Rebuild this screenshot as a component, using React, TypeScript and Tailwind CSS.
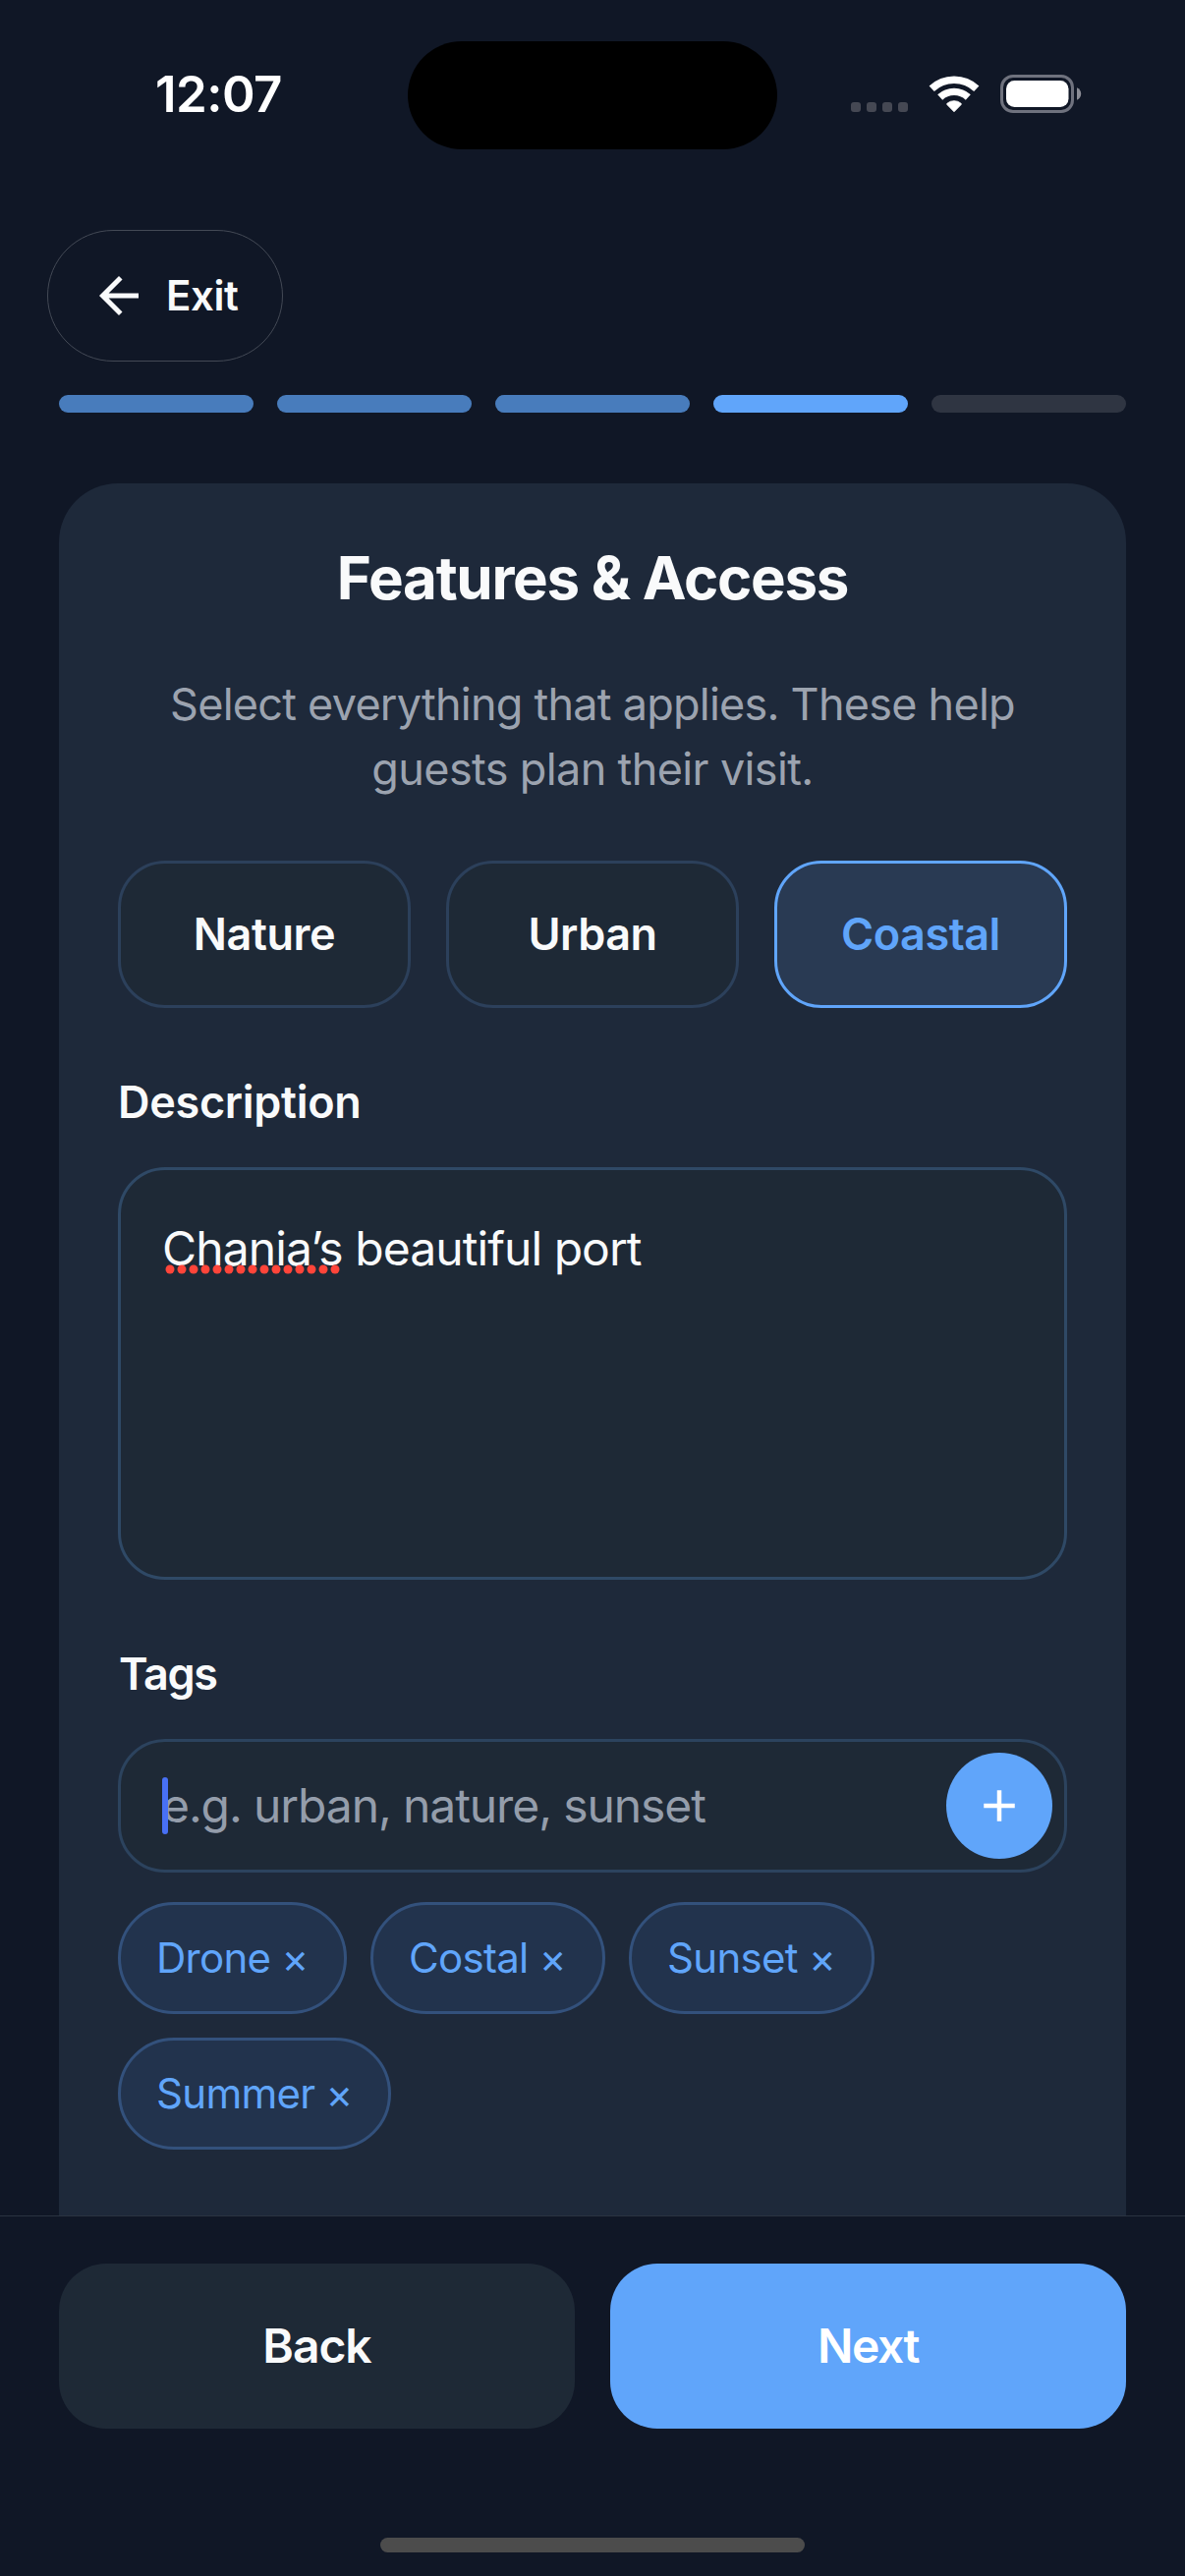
type Step = "done" | "current" | "upcoming";

const steps: Step[] = ["done", "done", "done", "current", "upcoming"];

const stepColor: Record<Step, string> = {
  done: "bg-[#487cbc]",
  current: "bg-[#60a5fa]",
  upcoming: "bg-[#2f3542]",
};

const settings = [
  { label: "Nature", selected: false, spacing: "tracking-[-0.4px]" },
  { label: "Urban", selected: false, spacing: "tracking-[-0.5px]" },
  { label: "Coastal", selected: true, spacing: "tracking-[-0.5px]" },
];

const tags = [
  { label: "Drone", width: "w-[233px]" },
  { label: "Costal", width: "w-[239px]" },
  { label: "Sunset", width: "w-[250px]" },
  { label: "Summer", width: "w-[278px]" },
];

function WifiIcon() {
  return (
    <svg className="h-[38px] w-[52px]" viewBox="0 0 52 38" fill="none">
      <path d="M3.2 13.2A33.4 33.4 0 0 1 48.8 13.2" stroke="white" strokeWidth="7.6" />
      <path d="M11.7 22A21.1 21.1 0 0 1 40.3 22" stroke="white" strokeWidth="7.4" />
      <path
        d="M26 36.8L18.9 29.6Q18.3 28.7 19.2 28A11 11 0 0 1 32.8 28Q33.7 28.7 33.1 29.6Z"
        fill="white"
        stroke="white"
        strokeWidth="0.8"
        strokeLinejoin="round"
      />
    </svg>
  );
}

function BatteryIcon() {
  return (
    <svg className="h-[39px] w-[83px]" viewBox="0 0 83 39" fill="none">
      <rect x="1.5" y="1.5" width="72" height="36" rx="11.5" stroke="#6f727e" strokeWidth="3" />
      <rect x="6" y="6" width="63.5" height="27" rx="8.5" fill="white" />
      <path d="M78 13.2C80.6 14.2 82.2 16.6 82.2 19.5S80.6 24.8 78 25.8Z" fill="#8b8d96" />
    </svg>
  );
}

function StatusBar() {
  return (
    <div className="relative flex h-[234px] shrink-0 items-start justify-between pl-[158px] pr-[105px] pt-[42px]">
      <span className="flex h-[108px] items-center text-[51px] font-semibold tracking-[-0.56px] text-white">
        12:07
      </span>
      <div className="absolute left-[415px] top-[42px] h-[110px] w-[376px] rounded-full bg-black" />
      <div className="flex h-[107px] items-center">
        <div className="mt-[27px] flex gap-[6px]">
          {[0, 1, 2, 3].map((dot) => (
            <span key={dot} className="size-[10px] rounded-[3px] bg-[#454853]" />
          ))}
        </div>
        <div className="ml-[21px] mt-px">
          <WifiIcon />
        </div>
        <div className="ml-[21px]">
          <BatteryIcon />
        </div>
      </div>
    </div>
  );
}

function TagChip({ label, width }: { label: string; width: string }) {
  return (
    <button
      className={`flex h-[114px] items-center whitespace-pre rounded-full border-[3px] border-[#33517c] bg-[#22334d] pb-px pl-[36px] text-[42px] tracking-[-0.7px] text-[#60a5fa] ${width}`}
    >
      {label} ×
    </button>
  );
}

export default function App() {
  return (
    <div className="flex h-[2622px] w-[1206px] flex-col overflow-hidden bg-[#101726] font-[Inter,sans-serif] text-[#f9fafb]">
      <StatusBar />

      <header className="shrink-0">
        <button className="ml-[48px] flex h-[134px] w-[240px] items-center rounded-full border border-[#434955] pl-[42px]">
          <svg className="size-[60px]" viewBox="0 0 24 24" fill="#f9fafb">
            <path d="M20 11H7.83l5.59-5.59L12 4l-8 8 8 8 1.41-1.41L7.83 13H20v-2z" />
          </svg>
          <span className="ml-[18px] pb-px text-[42px] font-semibold tracking-[-0.4px]">Exit</span>
        </button>
        <div className="mx-[60px] mt-[34px] grid grid-cols-5 gap-[24px]">
          {steps.map((step, i) => (
            <span key={i} className={`h-[18px] rounded-full ${stepColor[step]}`} />
          ))}
        </div>
      </header>

      <main className="mx-[60px] mt-[72px] flex h-[1763px] shrink-0 flex-col rounded-t-[60px] bg-[#1e293a] px-[60px]">
        <h1 className="mt-[59px] text-center text-[60px] font-bold leading-[74px] tracking-[-1.27px]">
          Features &amp; Access
        </h1>
        <p className="mt-[59px] whitespace-nowrap text-center text-[45px] leading-[66px] text-[#9ca3af]">
          <span className="tracking-[-0.757px]">Select everything that applies. These help</span>
          <br />
          <span className="tracking-[-0.63px]">guests plan their visit.</span>
        </p>

        <div className="mt-[60px] grid shrink-0 grid-cols-3 gap-[36px]">
          {settings.map(({ label, selected, spacing }) => (
            <button
              key={label}
              className={`h-[150px] rounded-[48px] border-[3px] text-[45px] font-semibold ${spacing} ${
                selected
                  ? "border-[#60a5fa] bg-[#293a53] text-[#60a5fa]"
                  : "border-[#2c405b] bg-[#1e2936]"
              }`}
            >
              {label}
            </button>
          ))}
        </div>

        <label className="mt-[67px] block text-[45px] font-semibold leading-[58px] tracking-[-0.3px]">
          Description
        </label>
        <div className="mt-[37px] h-[420px] shrink-0 rounded-[48px] border-[3px] border-[#2f4966] bg-[#1e2936] px-[42px] pt-[51px] text-[48px] leading-[58px] tracking-[-0.94px]">
          <span className="relative inline-block tracking-[-0.86px]">
            Chania’s
            <svg className="absolute left-[3px] top-[45px] h-[10px] w-[180px]" viewBox="0 0 180 10">
              {Array.from({ length: 15 }, (_, i) => (
                <circle key={i} cx={5 + i * 12} cy={5} r={4.5} fill="#ff453a" />
              ))}
            </svg>
          </span>{" "}
          beautiful port
        </div>

        <label className="mt-[67px] block pl-px text-[45px] font-semibold leading-[58px] tracking-[-1.4px]">
          Tags
        </label>
        <div className="relative mt-[37px] flex h-[136px] shrink-0 items-center justify-between rounded-[48px] border-[3px] border-[#2c435e] bg-[#1e2936] pl-[42px] pr-[12px]">
          <span className="text-[48px] tracking-[-1.1px] text-[#949dab]">e.g. urban, nature, sunset</span>
          <span className="absolute left-[42px] top-[36px] h-[58px] w-[6px] rounded-full bg-[#4870f5]" />
          <button className="flex size-[108px] items-center justify-center rounded-full bg-[#60a5fa]">
            <svg className="size-[54px]" viewBox="0 0 24 24" fill="white">
              <path d="M19 13h-6v6h-2v-6H5v-2h6V5h2v6h6v2z" />
            </svg>
          </button>
        </div>

        <div className="mt-[30px] flex flex-wrap gap-[24px]">
          {tags.map((tag) => (
            <TagChip key={tag.label} {...tag} />
          ))}
        </div>
      </main>

      <footer className="flex flex-1 flex-col items-center border-t border-[#2b3341] px-[60px] pt-[48px]">
        <div className="grid w-full grid-cols-2 gap-[36px] text-[48px] font-semibold">
          <button className="h-[168px] rounded-[48px] bg-[#1e2936] tracking-[-1.05px]">Back</button>
          <button className="h-[168px] rounded-[48px] bg-[#60a5fa] tracking-[-1.5px] text-white">Next</button>
        </div>
        <div className="mt-[111px] h-[15px] w-[432px] rounded-full bg-[#4c4c4c]" />
      </footer>
    </div>
  );
}
